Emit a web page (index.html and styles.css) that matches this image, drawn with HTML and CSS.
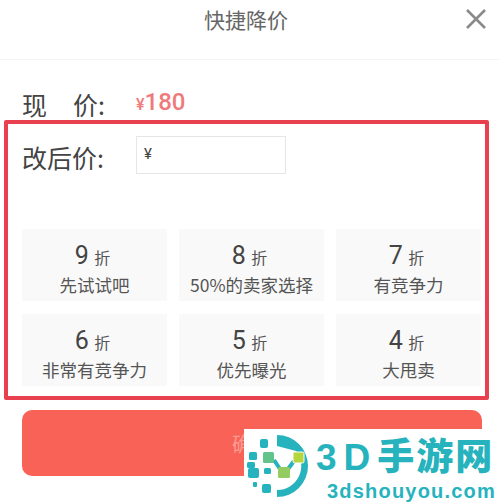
FILE: index.html
```html
<!DOCTYPE html>
<html lang="zh">
<head>
<meta charset="utf-8">
<title>快捷降价</title>
<link rel="stylesheet" href="styles.css">
</head>
<body>
<div class="page">
  <header class="header">
    <h1 class="title">快捷降价</h1>
    <svg class="close" viewBox="0 0 20 20" aria-hidden="true"><path d="M1 1 L19 19 M19 1 L1 19"/></svg>
  </header>
  <div class="current">
    <span class="label label-spaced"><span>现</span><span>价:</span></span>
    <span class="price"><small>¥</small>180</span>
  </div>
  <section class="box">
    <div class="edit">
      <span class="label label-edit">改后价:</span>
      <div class="input">¥</div>
    </div>
    <div class="grid">
      <div class="cell"><div class="num"><b>9</b> 折</div><div class="tip">先试试吧</div></div>
      <div class="cell"><div class="num"><b>8</b> 折</div><div class="tip">50%的卖家选择</div></div>
      <div class="cell"><div class="num"><b>7</b> 折</div><div class="tip">有竞争力</div></div>
      <div class="cell"><div class="num"><b>6</b> 折</div><div class="tip">非常有竞争力</div></div>
      <div class="cell"><div class="num"><b>5</b> 折</div><div class="tip">优先曝光</div></div>
      <div class="cell"><div class="num"><b>4</b> 折</div><div class="tip">大甩卖</div></div>
    </div>
  </section>
  <div class="confirm"><span>确定</span></div>
  <aside class="mark">
    <svg class="logo" viewBox="0 0 66 66" aria-hidden="true">
      <path class="ring" d="M33 2 A31 31 0 0 1 33 64 L33 57 A24 24 0 0 0 52 18 L33 13 Z"/>
      <rect class="t" x="16" y="6" width="8" height="9" rx="2"/>
      <rect class="t" x="5" y="19" width="8" height="8" rx="1.5"/>
      <rect class="t" x="3" y="29" width="8" height="6" rx="1.5"/>
      <rect class="t" x="4" y="35" width="11" height="10" rx="2"/>
      <rect class="t" x="20" y="35" width="7" height="6" rx="1.5"/>
      <rect class="t" x="9" y="49" width="4" height="5" rx="1"/>
      <rect class="t" x="18" y="51" width="9" height="9" rx="2"/>
      <path class="link" d="M30 27 L36 36 M44 36 L50 28"/>
      <rect class="g1" x="19" y="19" width="11" height="11" rx="1.5"/>
      <rect class="g3" x="34" y="34" width="12" height="11" rx="1.5"/>
      <rect class="g2" x="49" y="19" width="11" height="11" rx="1.5"/>
    </svg>
    <div class="brand">
      <div class="brand-cn"><span class="brand-3d">3D</span>手游网</div>
      <div class="brand-en">3dshouyou.com</div>
    </div>
  </aside>
</div>
</body>
</html>
```
FILE: styles.css
```css
html, body { margin: 0; padding: 0; background: #fff; }
body { font-family: "Noto Sans CJK SC", "Liberation Sans", sans-serif; color: #444; }
.page { position: relative; width: 500px; height: 504px; overflow: hidden; }
.header { height: 59px; border-bottom: 1px solid #f5f5f5; display: flex; justify-content: center; position: relative; }
.title { margin: 0; font-size: 21px; font-weight: 400; line-height: 38px; color: #666; padding-right: 8px; }
.close { position: absolute; right: 14px; top: 9px; width: 20px; height: 20px; }
.close path { fill: none; stroke: #8a8a8a; stroke-width: 2.6; }
.current { box-sizing: border-box; display: flex; align-items: center; height: 61px; padding: 29px 0 3px 22px; gap: 27px; }
.label { font-size: 25px; line-height: 30px; color: #444; width: 87px; white-space: nowrap; }
.label-spaced { display: flex; gap: 26px; }
.label-edit { padding-top: 3px; }
.price { font-family: Roboto, "Liberation Sans", sans-serif; font-size: 24px; font-weight: 500; color: #ee7a7c; margin-top: -4px; }
.price small { font-size: 16px; }
.box { box-sizing: border-box; margin: -1px 0 0 4px; width: 485px; height: 280px; border: 4px solid #e8404e; border-radius: 2px; padding: 12px 4px 0 14px; }
.edit { display: flex; align-items: center; gap: 27px; height: 38px; }
.input { box-sizing: border-box; width: 150px; height: 38px; border: 1px solid #e6e6e6; padding-left: 7px; font: 15px/34px Roboto, "Liberation Sans", sans-serif; color: #444; }
.grid { display: grid; grid-template-columns: repeat(3, 145px); grid-auto-rows: 72px; column-gap: 12px; row-gap: 13px; margin-top: 55px; }
.cell { background: #f9f9f9; text-align: center; padding-top: 11px; box-sizing: border-box; }
.num { font-size: 16px; line-height: 31px; color: #555; padding-right: 4px; }
.num b { font-family: Roboto, "Liberation Sans", sans-serif; font-size: 25px; font-weight: 400; color: #444; margin-right: 2px; }
.tip { font-size: 17.5px; line-height: 23px; color: #555; white-space: nowrap; }
.confirm { box-sizing: border-box; margin: 10px 0 0 22px; width: 460px; height: 66px; background: #f96256; border-radius: 10px; color: #fb9c93; font-size: 20px; display: flex; align-items: center; justify-content: center; }
.mark { position: absolute; left: 244px; top: 429px; width: 256px; height: 75px; background: #fff; display: flex; align-items: flex-start; }
.logo { width: 66px; height: 66px; margin-top: 4px; flex: none; }
.ring, .t { fill: #26b3bd; }
.link { fill: none; stroke: #26b3bd; stroke-width: 4; }
.g1 { fill: #62c48a; }
.g2 { fill: #b5d63f; stroke: #fff; stroke-width: 1; }
.g3 { fill: #93cc60; }
.brand { margin-left: 6px; }
.brand-cn { font-family: "Liberation Sans", "Noto Sans CJK SC", sans-serif; font-size: 37px; font-weight: 900; line-height: 38px; letter-spacing: 2px; color: #26b3bd; margin-top: 10px; white-space: nowrap; }
.brand-3d { letter-spacing: 7px; }
.brand-en { font-family: "Liberation Sans", sans-serif; font-size: 20px; font-weight: 700; line-height: 24px; color: #26b3bd; letter-spacing: 1.2px; margin: 2px 0 0 11px; white-space: nowrap; }
```
